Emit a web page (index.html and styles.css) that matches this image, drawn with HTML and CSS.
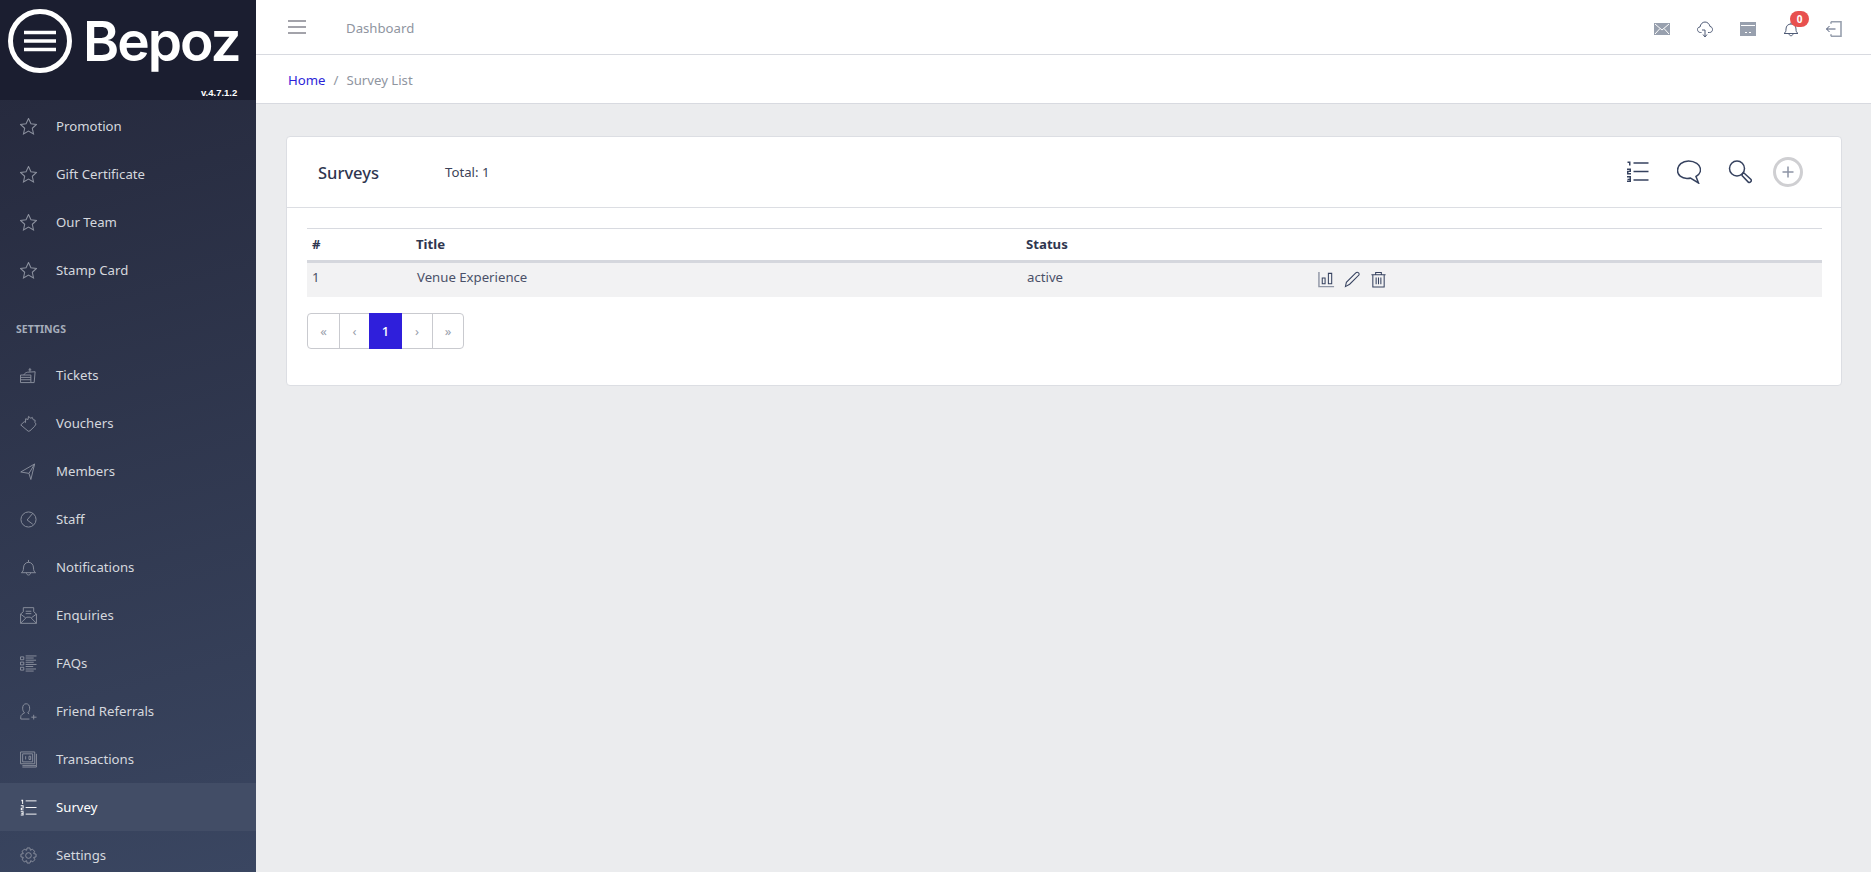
FILE: index.html
```html
<!DOCTYPE html>
<html lang="en">
<head>
<meta charset="utf-8">
<title>Surveys</title>
<link rel="stylesheet" href="styles.css">
</head>
<body>
<div class="app">
  <aside class="sidebar">
    <div class="brand">
      <div class="logo">
        <svg class="logo-mark" viewBox="0 0 64 64" width="64" height="64"><circle cx="32" cy="32" r="29.5" fill="none" stroke="#fff" stroke-width="5"/><path d="M16 23.5h32M16 32h32M16 40.500h32" stroke="#fff" stroke-width="3.500" fill="none"/></svg>
        <span class="logo-text">Bepoz</span>
      </div>
      <div class="version">v.4.7.1.2</div>
    </div>
    <nav class="menu">
      <a class="item"><svg class="ic" viewBox="1 1 16 16"><path d="M9 1.500l2.300 5 5.200.6-3.900 3.600 1.100 5.300L9 13.300 4.300 16l1.100-5.300L1.500 7.100l5.200-.6z"/></svg>Promotion</a>
      <a class="item"><svg class="ic" viewBox="1 1 16 16"><path d="M9 1.500l2.300 5 5.200.6-3.900 3.600 1.100 5.300L9 13.300 4.300 16l1.100-5.300L1.500 7.100l5.200-.6z"/></svg>Gift Certificate</a>
      <a class="item"><svg class="ic" viewBox="1 1 16 16"><path d="M9 1.500l2.300 5 5.200.6-3.900 3.600 1.100 5.300L9 13.300 4.300 16l1.100-5.300L1.500 7.100l5.200-.6z"/></svg>Our Team</a>
      <a class="item"><svg class="ic" viewBox="1 1 16 16"><path d="M9 1.500l2.300 5 5.200.6-3.900 3.600 1.100 5.300L9 13.300 4.300 16l1.100-5.300L1.500 7.100l5.200-.6z"/></svg>Stamp Card</a>
      <div class="menu-title">SETTINGS</div>
      <a class="item"><svg class="ic" viewBox="0 0 18 18"><path d="M.5 8.500h11v8H.5zM.5 11h11M.5 13.500h11M4 8.500c.5-1.500 2-2.500 4-3l8-.5-1 11.500h-3.500M10.500 5V1M9 3h3"/></svg>Tickets</a>
      <a class="item"><svg class="ic" viewBox="0 0 18 18"><path d="M.8 10.500L4.500 7l1.300 1 .2-4 2.500.8L9 1.500l2.500 2 1.500-1 1 2.500 2 .5-.2 2.500 1.200 1.500-1.500 2.500-5 4.800-1.800.4z"/></svg>Vouchers</a>
      <a class="item"><svg class="ic" viewBox="0 0 18 18"><path d="M15.500 1L.8 9.500l8.700 1.500 2 6.500zM15.500 1L9.500 11"/></svg>Members</a>
      <a class="item"><svg class="ic" viewBox="0 0 18 18"><circle cx="9" cy="9" r="8"/><path d="M13.500 2.500L7.500 9.500l6 4.500"/></svg>Staff</a>
      <a class="item"><svg class="ic" viewBox="0 0 18 18"><path d="M1.500 14.500c1.500-1 2.200-2.500 2.200-5 0-3.500 2.300-6 5.300-6s5.300 2.500 5.300 6c0 2.500.7 4 2.200 5zM9 3.500V1M6.800 14.500c0 3.300 4.400 3.300 4.400 0"/></svg>Notifications</a>
      <a class="item"><svg class="ic" viewBox="0 0 18 18"><path d="M.6 7.500v9.800h16.800V7.500L14.500 5V.7h-11V5zM.6 17.300l6.400-6.500h4l6.400 6.500M.6 7.500l5.400 4M17.400 7.500L12 11.500M6 4.500h6M6 7h6"/></svg>Enquiries</a>
      <a class="item"><svg class="ic" viewBox="0 0 18 18"><path d="M.5 2h3.500v3H.5zM.5 7.500h3.500v3H.5zM.5 13h3.500v3H.5zM6 1h11.500M6 3.200h8.500M6 5.500h11M6 7.700h8.500M6 10h11.500M6 12.200h8M6 14.800h11M6 17h8.500"/></svg>FAQs</a>
      <a class="item"><svg class="ic" viewBox="0 0 18 18"><path d="M.8 17v-2.500c0-2 2.200-3 4-4-1.500-1.500-2-3-2-5C2.800 2.500 4.300.8 6.500.8s3.700 1.700 3.700 4.700c0 2-.5 3.500-2 5l1.500 1M.8 17H10M14.500 12.500v5M12 15h5.500"/></svg>Friend Referrals</a>
      <a class="item"><svg class="ic" viewBox="0 0 18 18"><path d="M.6 1h15v12.500H.6zM2.800 3h10.600v8.500H2.800zM17.400 3v12.500H2.500M17.400 15.500v1.500H2.500M6 5.500v3.500M9.500 5.500h1.800v3.500H9.500z"/></svg>Transactions</a>
      <a class="item active"><svg class="ic" viewBox="0 0 18 18"><path class="solid" d="M1.500 .8h1.800v4.500H2.300V2.300h-.8zM.8 6.500h3v3.500H2v1h1.800v1H.8V9.200h2V7.700h-2zM.8 13h3v4.500h-3v-1h2v-.8H1.300v-.9h1.500V14h-2z"/><path d="M6 2h11.500M6 9h11.500M6 16h11.500"/></svg>Survey</a>
      <a class="item"><svg class="ic" viewBox="0 0 18 18"><circle cx="9" cy="9" r="3"/><path d="M7.500 1h3l.5 2.500 2.200-1.200 2.200 2.200L14.500 7l2.500.5v3l-2.500.5 1.200 2.500-2.200 2.200-2.200-1.200-.8 2.500h-3l-.5-2.500-2.500 1.200-2.200-2.200L3.500 11 1 10.500v-3L3.500 7 2.300 4.500l2.200-2.200L7 3.500z"/></svg>Settings</a>
    </nav>
  </aside>
  <main class="main">
    <header class="topbar">
      <svg class="burger" viewBox="0 0 18 14" width="18" height="14"><path d="M0 1h18M0 7h18M0 13h18"/></svg>
      <span class="top-link">Dashboard</span>
      <div class="top-icons">
        <svg class="tic" viewBox="0 0 16 16"><path class="tfill" d="M0 2h16v12H0z"/><path class="cut" d="M1 3l7 6 7-6M1 13l5-5.500M15 13l-5-5.500"/></svg>
        <svg class="tic" viewBox="0 0 16 16"><path d="M4.500 11.500H3.500C1.500 11.500.5 10 .5 8.500.5 7 1.500 6 3 6c.5-3 2.500-5 5-5s4.500 2 5 4.500c1.500 0 2.500 1.500 2.500 3s-1 3-3 3h-1.500M5 9h3v6.500M6 13.500l2 2.500 2-2.500"/></svg>
        <svg class="tic" viewBox="0 0 16 16"><path class="tfill" d="M0 1h16v14H0z"/><path class="cut" d="M1 4.500h14M5 11.500h2M9 11.500h2"/></svg>
        <span class="bell"><svg class="tic" viewBox="0 0 16 16"><path d="M1 12.500c1.500-1 2-2 2-4.500 0-3 2-5 5-5s5 2 5 5c0 2.500.5 3.500 2 4.500zM8 3V1.500M6 12.500c0 3 4 3 4 0"/></svg><b class="badge">0</b></span>
        <svg class="tic" viewBox="0 0 16 16"><path class="thick" d="M5 .8h10v14.400H5M5 .8v2M5 15.200v-2"/><path d="M.5 8H9.500M3.500 5L.5 8l3 3"/></svg>
      </div>
    </header>
    <div class="crumbs"><a class="home">Home</a><span class="sep">/</span><span class="cur">Survey List</span></div>
    <section class="content">
      <div class="card">
        <div class="card-head">
          <h1 class="card-title">Surveys</h1>
          <span class="total">Total: 1</span>
          <div class="card-tools">
            <svg class="tool" viewBox="0 0 24 24"><path class="solid-dark" d="M1.500 1.500h3v4H3V3H1.500zM1 8.500h4v3.500H2.500v1H5v1.500H1V10.800h2.500V10H1zM1 16h4v6H1v-1.500h2.500V20H1.500v-1.200h2V17.500H1z"/><path d="M7.500 3h15M7.500 11.500h15M7.500 20h15"/></svg>
            <svg class="tool" viewBox="0 0 24 24"><path d="M11.500 1C5.500 1 .5 5 .5 10.500c0 4.500 4 8 9.500 8 1.500 0 2.500 0 3.500-.5l8 5-2.500-6.500c2.500-1.500 4.500-3.500 4.500-6.500C23.500 4.500 17.500 1 11.500 1z"/></svg>
            <svg class="tool" viewBox="0 0 24 24"><circle cx="9" cy="8.500" r="7.500"/><path d="M14.500 13.500l1.500-.5 7 6.500c1 1.500-1 3.800-2.500 2.800L14 15.500z"/></svg>
            <span class="add"><svg viewBox="0 0 14 14" width="14" height="14"><path d="M7 1.500v11M1.500 7h11"/></svg></span>
          </div>
        </div>
        <div class="card-body">
          <table class="table">
            <colgroup><col class="c1"><col class="c2"><col class="c3"><col></colgroup>
            <thead><tr><th>#</th><th>Title</th><th>Status</th><th></th></tr></thead>
            <tbody><tr>
              <td>1</td><td>Venue Experience</td><td>active</td>
              <td class="actions">
                <svg class="act" viewBox="0 0 18 18"><path class="gray" d="M1 1v15.500h16"/><path d="M4.500 7.500h3v6h-3zM11 2.500h3.500v11H11z"/></svg>
                <svg class="act" viewBox="0 0 18 18"><path d="M1.500 16.500l1-4.500L12.500 2c1-1 4-1 3.500 2L6 14z"/></svg>
                <svg class="act" viewBox="0 0 18 18"><path d="M1.500 4h15M6 4V1.500h6V4M3 4v13h12V4M6.500 7v7M9 7v7M11.500 7v7"/></svg>
              </td>
            </tr></tbody>
          </table>
          <ul class="pager">
            <li>«</li><li>‹</li><li class="on">1</li><li>›</li><li>»</li>
          </ul>
        </div>
      </div>
    </section>
  </main>
</div>
</body>
</html>
```
FILE: styles.css
```css
* { box-sizing: border-box; }
html, body { margin: 0; height: 100%; overflow: hidden; }
body { font-family: "Noto Sans", "Open Sans", sans-serif; font-size: 13.2px; color: #3c4257; background: #ebecee; }
.app { display: grid; grid-template-columns: 256px 1fr; height: 872px; }

.sidebar { display: flex; flex-direction: column; height: 872px; overflow: hidden; background: linear-gradient(165deg, #24273a 0%, #3a4661 100%); }
.brand { height: 100px; flex: none; background: #1b1e30; padding: 9px 0 0 8px; display: flex; flex-direction: column; }
.logo { display: flex; align-items: center; gap: 11px; height: 64px; }
.logo-mark { flex: none; }
.logo-text { font-family: Inter, sans-serif; font-size: 55px; font-weight: 600; letter-spacing: -2px; color: #fff; line-height: 64px; }
.version { margin: 14px 0 0 193px; font-family: "Liberation Sans", sans-serif; font-size: 9.5px; font-weight: 700; line-height: 12px; color: #fff; }
.menu { display: flex; flex-direction: column; padding-top: 2px; }
.item { display: flex; align-items: center; height: 48px; padding-left: 20px; color: #d5d8de; flex: none; }
.item.active { background: #424d66; color: #fff; }
.ic { width: 17px; height: 17px; margin-right: 19px; flex: none; fill: none; stroke: #8b909e; stroke-width: 1; }
.active .ic { stroke: #fff; }
.solid { fill: #fff; stroke: none; }
.menu-title { height: 57px; padding: 28px 0 0 16px; font-size: 10.5px; font-weight: 700; line-height: 14px; color: #a5adbb; flex: none; }

.main { display: flex; flex-direction: column; min-width: 0; }
.topbar { display: flex; align-items: center; height: 55px; flex: none; padding: 0 29px 0 32px; background: #fff; border-bottom: 1px solid #d8dae0; }
.burger { fill: none; stroke: #85858f; stroke-width: 1.5; }
.top-link { margin: 2px 0 0 40px; color: #8f959f; }
.top-icons { margin-left: auto; display: flex; align-items: center; gap: 27px; padding-top: 3px; }
.tic { display: block; width: 16px; height: 16px; fill: none; stroke: #4f5b76; stroke-width: 1; }
.tfill { fill: #98a0ae; stroke: none; }
.cut { stroke: #fff; }
.thick { stroke: #98a0ae; stroke-width: 1.6; }
.bell { position: relative; display: block; }
.badge { position: absolute; top: -10px; left: 7px; width: 19px; height: 16px; border-radius: 8px; background: #e8504f; color: #fff; font-size: 10px; line-height: 16px; text-align: center; }
.crumbs { display: flex; align-items: center; gap: 8px; height: 49px; flex: none; padding: 1px 19px 0 32px; background: #fff; border-bottom: 1px solid #d8dae0; color: #8f959f; }
.home { color: #2d1fd8; }
.sep { color: #8f959f; }

.content { flex: 1; padding: 32px 29px 0 30px; }
.card { height: 250px; background: #fff; border: 1px solid #dcdee3; border-radius: 4px; }
.card-head { display: flex; align-items: center; height: 71px; padding: 0 38px 0 31px; border-bottom: 1px solid #dcdee3; }
.card-title { margin: 0; width: 127px; font-size: 16.5px; font-weight: 500; color: #2f3650; }
.total { color: #3c4257; }
.card-tools { margin-left: auto; display: flex; align-items: center; gap: 27px; }
.tool { display: block; width: 24px; height: 24px; fill: none; stroke: #36425f; stroke-width: 1.5; }
.solid-dark { fill: #36425f; stroke: none; }
.add { display: flex; align-items: center; justify-content: center; width: 30px; height: 30px; border: 3px solid #cfcfd2; border-radius: 50%; margin-left: -6px; }
.add svg { fill: none; stroke: #8d94a5; stroke-width: 1.5; }

.card-body { padding: 20px 19px 0 20px; }
.table { width: 100%; border-collapse: collapse; table-layout: fixed; }
.c1 { width: 104px; } .c2 { width: 610px; } .c3 { width: 291px; }
.table th { height: 33px; padding: 0 0 1px 5px; border-top: 1px solid #d8dae0; border-bottom: 3px solid #d5d7dd; text-align: left; font-weight: 700; color: #2f3650; }
.table td { height: 35px; padding: 0 0 6px 6px; background: #f2f2f3; color: #4a5068; }
.table th:first-child, .table td:first-child { padding-left: 5px; }
.actions { font-size: 0; }
.act { display: inline-block; vertical-align: middle; width: 17px; height: 17px; margin: 5px 9px 0 0; fill: none; stroke: #36425f; stroke-width: 1.1; }
.gray { stroke: #8e95a5; stroke-width: 1.5; }

.pager { display: flex; width: fit-content; list-style: none; margin: 16px 0 0; padding: 0; border: 1px solid #c9cacf; border-radius: 4px; height: 36px; }
.pager li { display: flex; align-items: center; justify-content: center; width: 30px; font-size: 13px; color: #9aa0ac; border-left: 1px solid #c9cacf; }
.pager li:first-child { width: 31px; border-left: 0; }
.pager li:last-child { width: 31px; }
.pager li.on { width: 33px; margin: -1px 0; background: #2f1fdb; border-left: 0; color: #fff; font-weight: 500; }
.pager li.on + li { border-left: 0; }
```
